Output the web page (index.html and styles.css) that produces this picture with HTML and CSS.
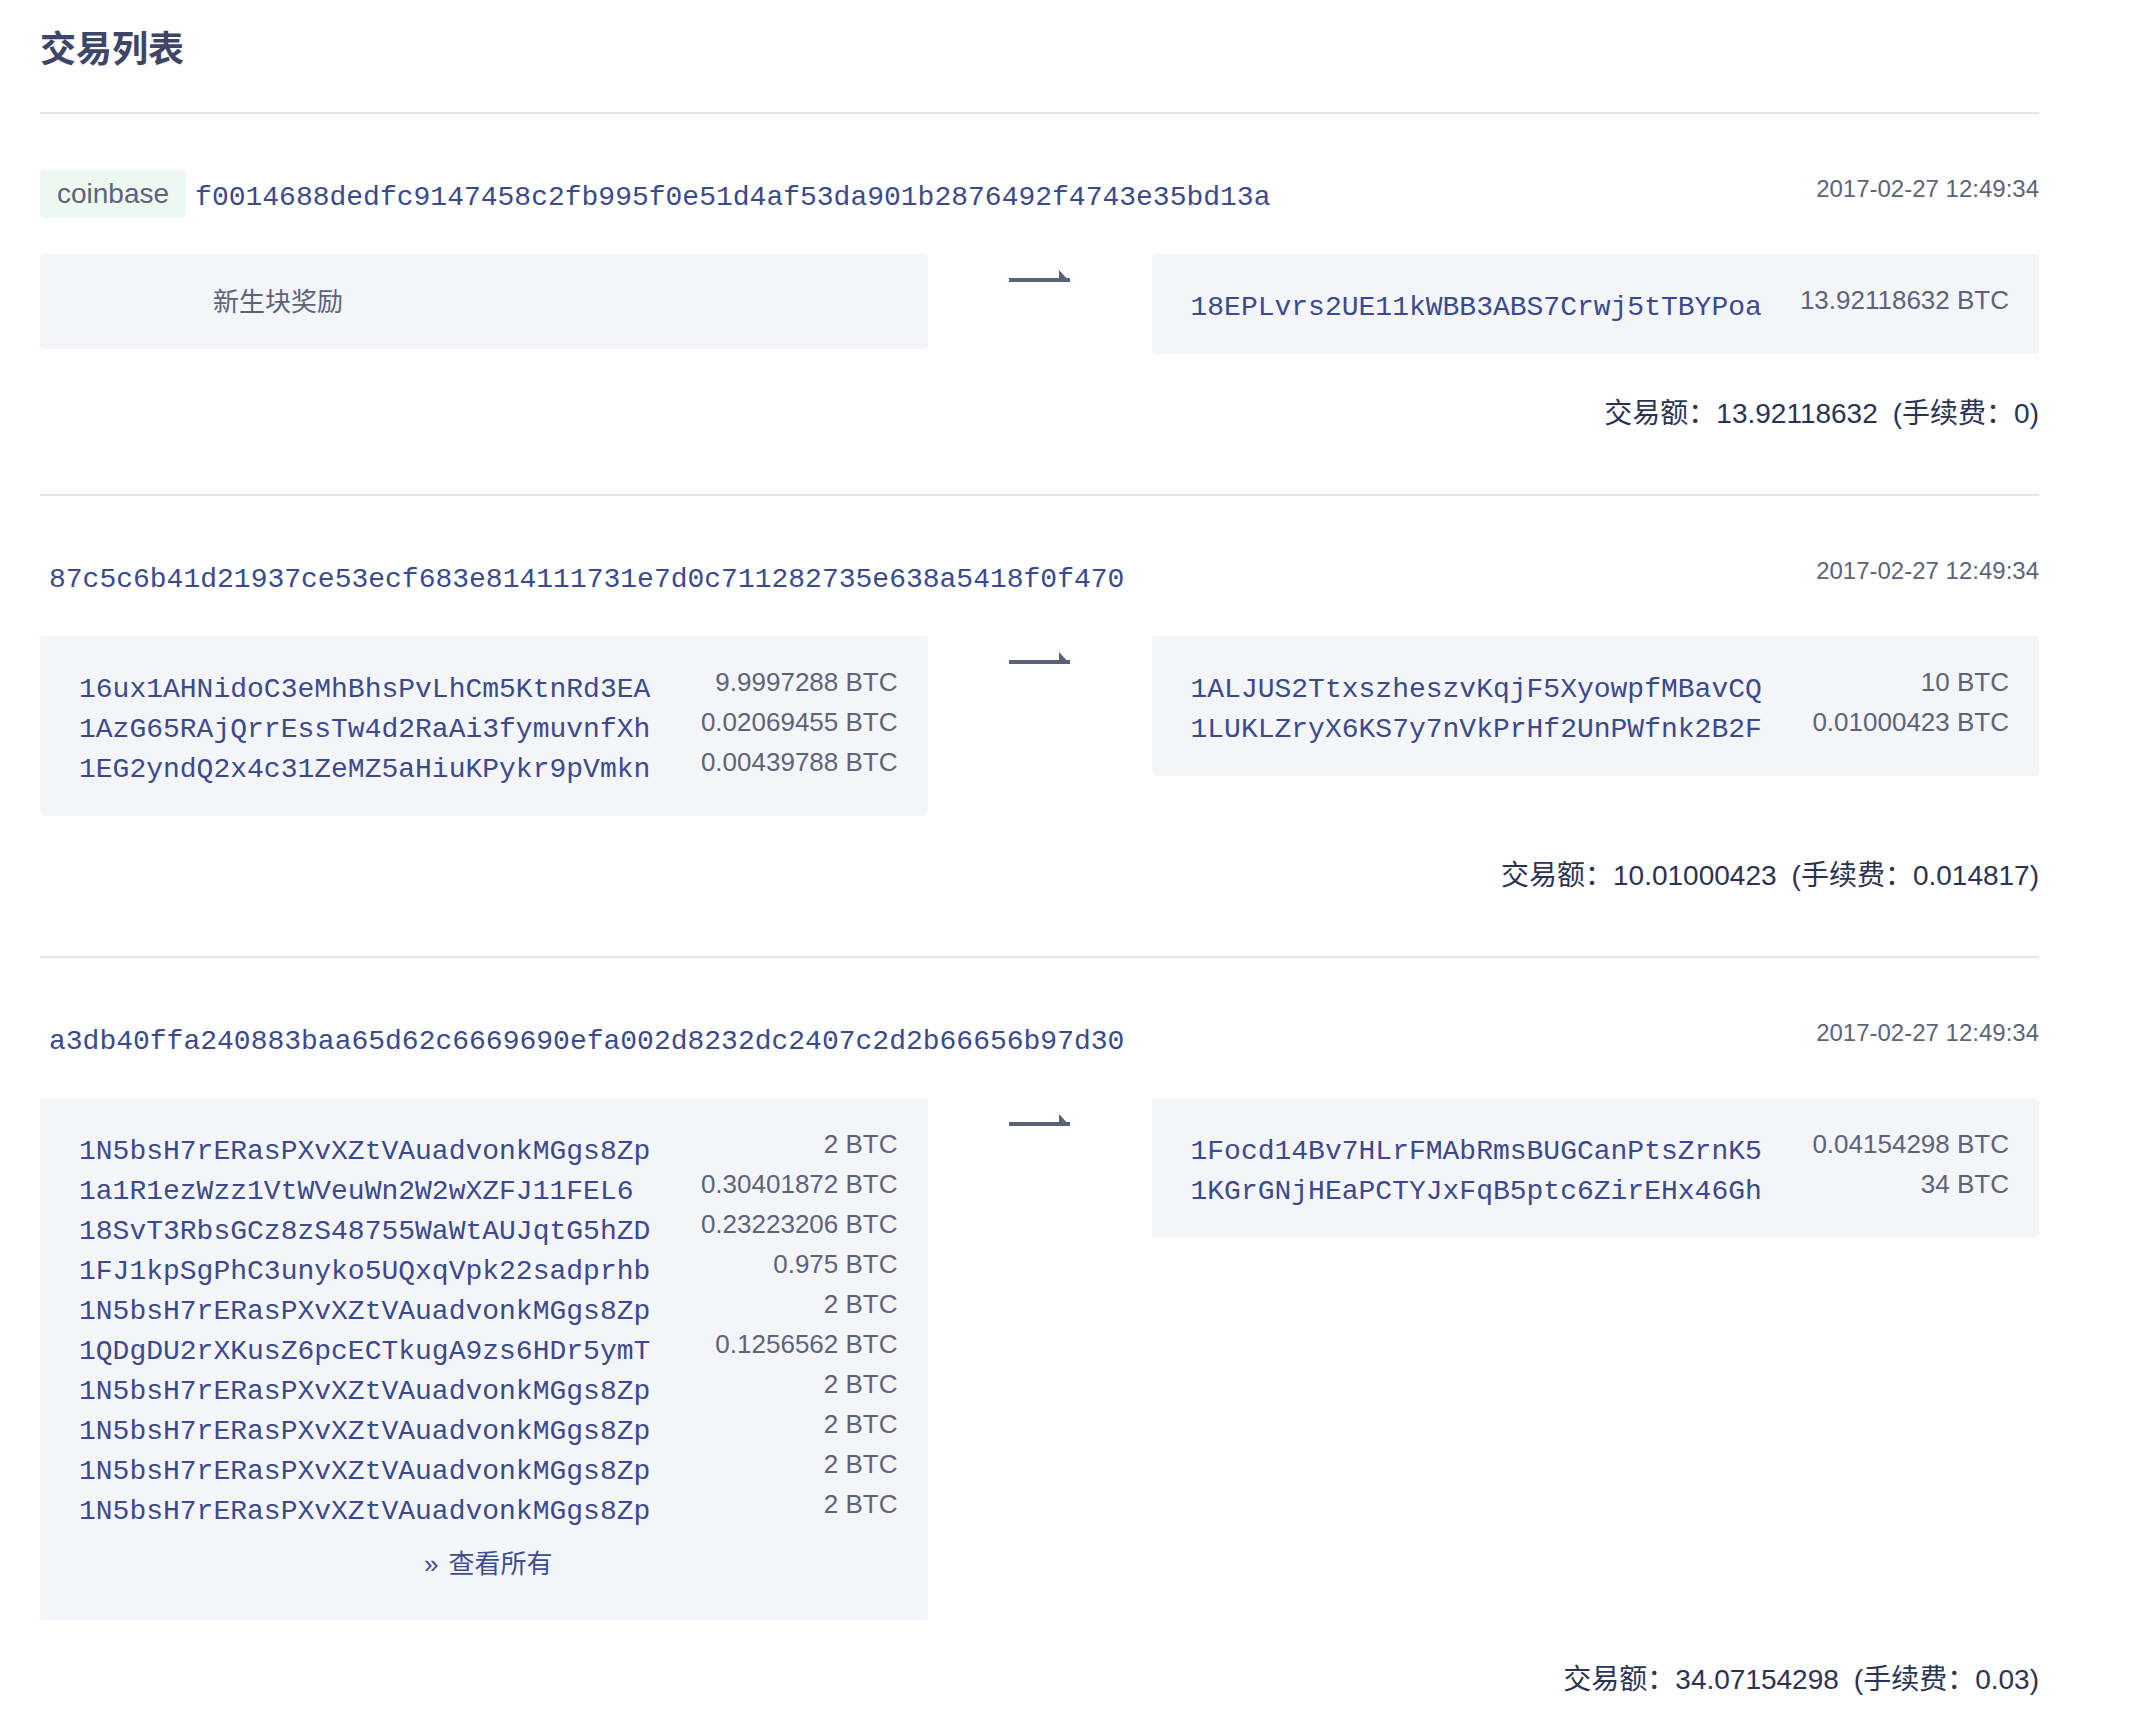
FILE: index.html
```html
<!DOCTYPE html>
<html lang="zh-CN">
<head>
<meta charset="utf-8">
<title>交易列表</title>
<link rel="stylesheet" href="styles.css">
</head>
<body>
<div class="page">
  <h1 class="title">交易列表</h1>

  <section class="tx">
    <div class="tx-head">
      <span class="badge">coinbase</span>
      <span class="hash">f0014688dedfc9147458c2fb995f0e51d4af53da901b2876492f4743e35bd13a</span>
      <span class="time">2017-02-27 12:49:34</span>
    </div>
    <div class="tx-body">
      <div class="box box-coinbase">新生块奖励</div>
      <div class="arrow-cell">
        <svg class="arrow" width="61" height="12" viewBox="0 0 61 12"><rect x="0" y="8" width="61" height="4"/><polygon points="50,0 61,12 50,12"/></svg>
      </div>
      <div class="box">
        <div class="row"><span class="addr">18EPLvrs2UE11kWBB3ABS7Crwj5tTBYPoa</span><span class="amt">13.92118632 BTC</span></div>
      </div>
    </div>
    <div class="total">交易额：13.92118632<span class="fee">(手续费：0)</span></div>
  </section>

  <section class="tx">
    <div class="tx-head">
      <span class="hash">87c5c6b41d21937ce53ecf683e814111731e7d0c711282735e638a5418f0f470</span>
      <span class="time">2017-02-27 12:49:34</span>
    </div>
    <div class="tx-body">
      <div class="box">
        <div class="row"><span class="addr">16ux1AHNidoC3eMhBhsPvLhCm5KtnRd3EA</span><span class="amt">9.9997288 BTC</span></div>
        <div class="row"><span class="addr">1AzG65RAjQrrEssTw4d2RaAi3fymuvnfXh</span><span class="amt">0.02069455 BTC</span></div>
        <div class="row"><span class="addr">1EG2yndQ2x4c31ZeMZ5aHiuKPykr9pVmkn</span><span class="amt">0.00439788 BTC</span></div>
      </div>
      <div class="arrow-cell">
        <svg class="arrow" width="61" height="12" viewBox="0 0 61 12"><rect x="0" y="8" width="61" height="4"/><polygon points="50,0 61,12 50,12"/></svg>
      </div>
      <div class="box">
        <div class="row"><span class="addr">1ALJUS2TtxszheszvKqjF5XyowpfMBavCQ</span><span class="amt">10 BTC</span></div>
        <div class="row"><span class="addr">1LUKLZryX6KS7y7nVkPrHf2UnPWfnk2B2F</span><span class="amt">0.01000423 BTC</span></div>
      </div>
    </div>
    <div class="total">交易额：10.01000423<span class="fee">(手续费：0.014817)</span></div>
  </section>

  <section class="tx tx-last">
    <div class="tx-head">
      <span class="hash">a3db40ffa240883baa65d62c6669690efa002d8232dc2407c2d2b66656b97d30</span>
      <span class="time">2017-02-27 12:49:34</span>
    </div>
    <div class="tx-body">
      <div class="box">
        <div class="row"><span class="addr">1N5bsH7rERasPXvXZtVAuadvonkMGgs8Zp</span><span class="amt">2 BTC</span></div>
        <div class="row"><span class="addr">1a1R1ezWzz1VtWVeuWn2W2wXZFJ11FEL6</span><span class="amt">0.30401872 BTC</span></div>
        <div class="row"><span class="addr">18SvT3RbsGCz8zS48755WaWtAUJqtG5hZD</span><span class="amt">0.23223206 BTC</span></div>
        <div class="row"><span class="addr">1FJ1kpSgPhC3unyko5UQxqVpk22sadprhb</span><span class="amt">0.975 BTC</span></div>
        <div class="row"><span class="addr">1N5bsH7rERasPXvXZtVAuadvonkMGgs8Zp</span><span class="amt">2 BTC</span></div>
        <div class="row"><span class="addr">1QDgDU2rXKusZ6pcECTkugA9zs6HDr5ymT</span><span class="amt">0.1256562 BTC</span></div>
        <div class="row"><span class="addr">1N5bsH7rERasPXvXZtVAuadvonkMGgs8Zp</span><span class="amt">2 BTC</span></div>
        <div class="row"><span class="addr">1N5bsH7rERasPXvXZtVAuadvonkMGgs8Zp</span><span class="amt">2 BTC</span></div>
        <div class="row"><span class="addr">1N5bsH7rERasPXvXZtVAuadvonkMGgs8Zp</span><span class="amt">2 BTC</span></div>
        <div class="row"><span class="addr">1N5bsH7rERasPXvXZtVAuadvonkMGgs8Zp</span><span class="amt">2 BTC</span></div>
        <div class="more"><a class="more-link" href="#"><span class="raquo">»</span>查看所有</a></div>
      </div>
      <div class="arrow-cell">
        <svg class="arrow" width="61" height="12" viewBox="0 0 61 12"><rect x="0" y="8" width="61" height="4"/><polygon points="50,0 61,12 50,12"/></svg>
      </div>
      <div class="box">
        <div class="row"><span class="addr">1Focd14Bv7HLrFMAbRmsBUGCanPtsZrnK5</span><span class="amt">0.04154298 BTC</span></div>
        <div class="row"><span class="addr">1KGrGNjHEaPCTYJxFqB5ptc6ZirEHx46Gh</span><span class="amt">34 BTC</span></div>
      </div>
    </div>
    <div class="total">交易额：34.07154298<span class="fee">(手续费：0.03)</span></div>
  </section>
</div>
</body>
</html>
```

FILE: styles.css
```css
html, body {
  margin: 0;
  padding: 0;
  background: #ffffff;
}

body {
  font-family: "Liberation Sans", "Noto Sans CJK SC", sans-serif;
  color: #5d6379;
}

.page {
  padding: 0 95px 0 40px;
}

.title {
  margin: 0;
  padding: 22px 0 42px;
  font-size: 36px;
  line-height: 48px;
  font-weight: 700;
  color: #3d4669;
  font-family: "Noto Sans CJK SC", sans-serif;
  border-bottom: 2px solid #e3e3e9;
}

.tx {
  padding: 56px 0 60px;
  border-bottom: 2px solid #e3e3e9;
}

.tx-last {
  border-bottom: none;
}

.tx-head {
  display: flex;
  align-items: center;
  height: 48px;
}

.badge {
  display: inline-block;
  height: 48px;
  line-height: 48px;
  padding: 0 17px;
  border-radius: 4px;
  background: #edf8f1;
  color: #5d6379;
  font-size: 28px;
}

.hash {
  margin-left: 9px;
  padding-top: 8px;
  font-family: "Liberation Mono", monospace;
  font-size: 28px;
  line-height: 32px;
  color: #3b4a8c;
}

.time {
  margin-left: auto;
  align-self: flex-start;
  font-size: 24px;
  line-height: 38px;
  color: #5d6379;
}

.tx-body {
  display: grid;
  grid-template-columns: 1fr 224px 1fr;
  align-items: start;
  margin-top: 36px;
}

.box {
  background: #f4f5f9;
  border-radius: 4px;
  padding: 30px 30px 30px 39px;
}

.box-coinbase {
  padding: 28px 30px 32px 173px;
  font-size: 26px;
  line-height: 35px;
  color: #5d6379;
  font-family: "Noto Sans CJK SC", sans-serif;
}

.row {
  display: grid;
  grid-template-columns: 1fr auto;
  align-items: start;
}

.addr {
  padding-top: 8px;
  font-family: "Liberation Mono", monospace;
  font-size: 28px;
  line-height: 32px;
  color: #3b4a8c;
  white-space: nowrap;
}

.amt {
  font-size: 26px;
  line-height: 32px;
  text-align: right;
  color: #5d6379;
  white-space: nowrap;
}

.more {
  padding: 16px 0 2px;
  text-align: center;
  line-height: 40px;
}

.more-link {
  font-size: 26px;
  color: #3e4d8e;
  text-decoration: none;
}

.raquo {
  margin-right: 10px;
}

.arrow-cell {
  display: flex;
  justify-content: center;
  padding-top: 16px;
}

.arrow {
  display: block;
  fill: #5b6178;
}

.total {
  margin-top: 40px;
  text-align: right;
  font-size: 28px;
  line-height: 40px;
  color: #2c3352;
}

.fee {
  margin-left: 15px;
}
```
